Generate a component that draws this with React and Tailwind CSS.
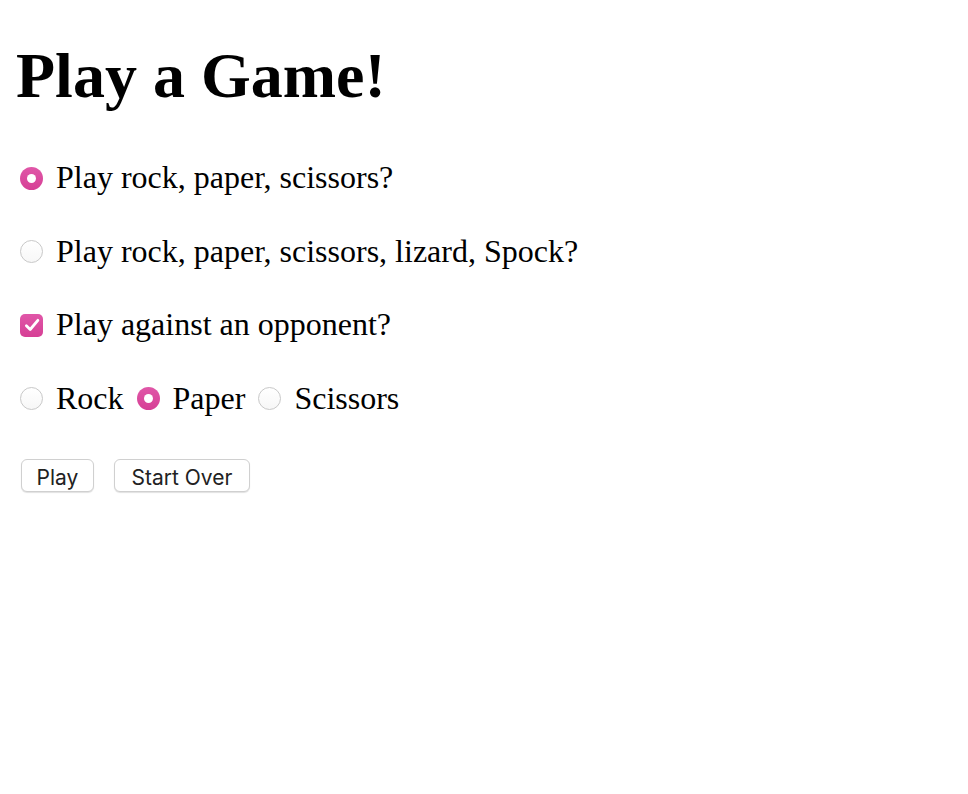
import React from 'react';

function Radio({ checked }) {
  if (checked) {
    return (
      <span className="inline-flex h-[23px] w-[23px] shrink-0 items-center justify-center rounded-full bg-gradient-to-b from-[#e056a8] to-[#d63f95]">
        <span className="h-[9px] w-[9px] rounded-full bg-white" />
      </span>
    );
  }
  return (
    <span className="inline-block h-[23px] w-[23px] shrink-0 rounded-full border border-[#c8c8c8] bg-gradient-to-b from-white to-[#f7f7f7]" />
  );
}

function Checkbox() {
  return (
    <span className="inline-flex h-[23px] w-[23px] shrink-0 items-center justify-center rounded-[5px] bg-gradient-to-b from-[#e056a8] to-[#d63f95]">
      <svg width="18" height="18" viewBox="0 0 16 16" fill="none">
        <path d="M3 8.6 L6.4 12 L13.2 3.8" stroke="white" strokeWidth="2.5" strokeLinecap="round" strokeLinejoin="round" />
      </svg>
    </span>
  );
}

export default function App() {
  return (
    <div className="min-h-screen bg-white text-black font-['Liberation_Serif','Times_New_Roman',serif]">
      <div className="px-4 pt-[39px]">
        <h1 className="text-[64px] font-bold leading-[74px]">Play a Game!</h1>

        <div className="mt-[45px] flex flex-col gap-[33.5px] pl-1 text-[32px]">
          <label className="flex h-[40px] items-center gap-[13px]">
            <Radio checked />
            <span className="-mt-[2px]">Play rock, paper, scissors?</span>
          </label>
          <label className="flex h-[40px] items-center gap-[13px]">
            <Radio />
            <span className="-mt-[2px]">Play rock, paper, scissors, lizard, Spock?</span>
          </label>
          <label className="flex h-[40px] items-center gap-[13px]">
            <Checkbox />
            <span className="-mt-[2px]">Play against an opponent?</span>
          </label>
          <div className="flex h-[40px] items-center gap-[13px]">
            <Radio />
            <span className="-mt-[2px]">Rock</span>
            <Radio checked />
            <span className="-mt-[2px]">Paper</span>
            <Radio />
            <span className="-mt-[2px]">Scissors</span>
          </div>
        </div>

        <div className="mt-[40px] flex gap-5 pl-[5px] font-['Inter','Liberation_Sans',sans-serif] text-[21px] text-[#222]">
          <button className="h-[33px] w-[73px] rounded-[6px] border border-[#d0d0d0] bg-white pt-[2px] shadow-[0_1px_1px_rgba(0,0,0,0.12)]">
            Play
          </button>
          <button className="h-[33px] w-[136px] rounded-[6px] border border-[#d0d0d0] bg-white pt-[2px] shadow-[0_1px_1px_rgba(0,0,0,0.12)]">
            Start Over
          </button>
        </div>
      </div>
    </div>
  );
}
